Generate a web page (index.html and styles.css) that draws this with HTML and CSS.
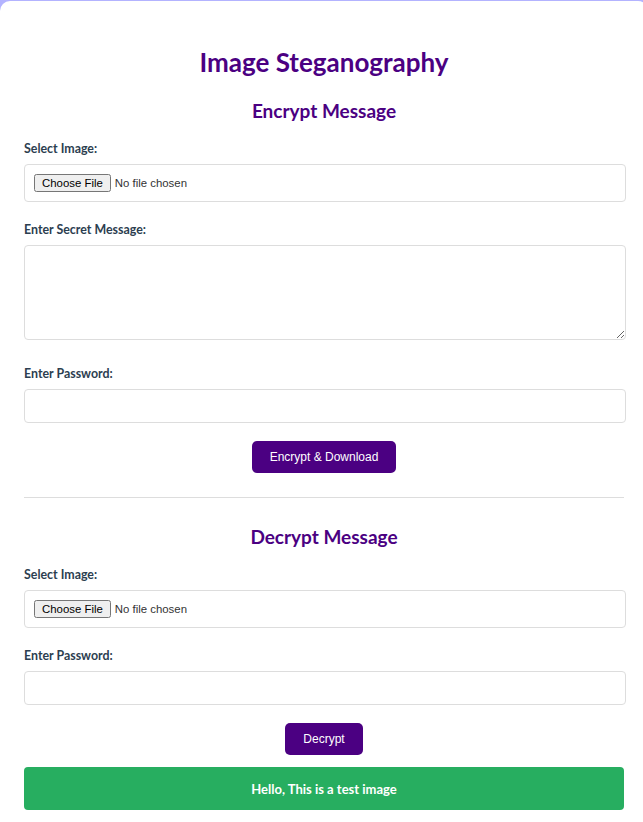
FILE: index.html
```html
<!DOCTYPE html>
<html>
<head>
<meta charset="utf-8">
<title>Image Steganography</title>
<link rel="stylesheet" href="styles.css">
</head>
<body>
<div class="card">
  <h1 class="title">Image Steganography</h1>

  <section class="section">
    <h2 class="section-title">Encrypt Message</h2>
    <div class="group">
      <label class="label">Select Image:</label>
      <div class="file-box"><input type="file" class="file"></div>
    </div>
    <div class="group">
      <label class="label">Enter Secret Message:</label>
      <textarea class="textarea"></textarea>
    </div>
    <div class="group">
      <label class="label">Enter Password:</label>
      <input type="password" class="input">
    </div>
    <div class="actions"><button class="btn">Encrypt &amp; Download</button></div>
  </section>

  <hr class="divider">

  <section class="section">
    <h2 class="section-title">Decrypt Message</h2>
    <div class="group">
      <label class="label">Select Image:</label>
      <div class="file-box"><input type="file" class="file"></div>
    </div>
    <div class="group">
      <label class="label">Enter Password:</label>
      <input type="password" class="input">
    </div>
    <div class="actions"><button class="btn">Decrypt</button></div>
    <div class="result">Hello, This is a test image</div>
  </section>
</div>
</body>
</html>
```

FILE: styles.css
```css
html, body {
  margin: 0;
  padding: 0;
}
body {
  background: #b3b3ff;
  padding-top: 1px;
  font-family: "Lato", "Liberation Sans", sans-serif;
}
.card {
  background: #ffffff;
  width: 600px;
  margin: 0 auto;
  padding: 45px 24px 40px;
  border-radius: 10px;
}
.title {
  margin: 0 0 21px;
  font-size: 26px;
  line-height: 32px;
  font-weight: 700;
  color: #4b0082;
  text-align: center;
}
.section-title {
  margin: 0 0 16px;
  font-size: 19px;
  line-height: 24px;
  font-weight: 700;
  color: #4b0082;
  text-align: center;
}
.group {
  display: flex;
  flex-direction: column;
  align-items: flex-start;
  margin-bottom: 18px;
}
.label {
  display: block;
  font-size: 12.4px;
  line-height: 20px;
  font-weight: 700;
  color: #2c3e50;
  margin-bottom: 5px;
}
.file-box {
  box-sizing: border-box;
  width: 602px;
  height: 38px;
  border: 1px solid #dddddd;
  border-radius: 4px;
  padding: 0 9px;
  display: flex;
  align-items: center;
}
.file {
  font-family: "Liberation Sans", Arial, sans-serif;
  font-size: 11.4px;
  color: #333;
}
.textarea {
  box-sizing: border-box;
  display: block;
  width: 602px;
  height: 95px;
  border: 1px solid #dddddd;
  border-radius: 4px;
  padding: 8px;
  margin: 0 0 6px;
  font-family: "Liberation Sans", Arial, sans-serif;
  font-size: 13px;
}
.input {
  box-sizing: border-box;
  display: block;
  width: 602px;
  height: 34px;
  border: 1px solid #dddddd;
  border-radius: 4px;
  padding: 8px;
  margin: 0;
  font-size: 13px;
}
.actions {
  display: flex;
  justify-content: center;
}
.btn {
  background: #4b0082;
  color: #ffffff;
  border: none;
  border-radius: 5px;
  padding: 0 18px;
  height: 32px;
  font-family: "Liberation Sans", Arial, sans-serif;
  font-size: 12px;
  cursor: pointer;
}
.divider {
  border: none;
  border-top: 1px solid #dddddd;
  margin: 24px 0 27px;
  height: 0;
}
.result {
  margin-top: 12px;
  height: 43px;
  border-radius: 4px;
  background: #27ae60;
  color: #ffffff;
  font-size: 13px;
  font-weight: 700;
  display: flex;
  align-items: center;
  justify-content: center;
}
```
